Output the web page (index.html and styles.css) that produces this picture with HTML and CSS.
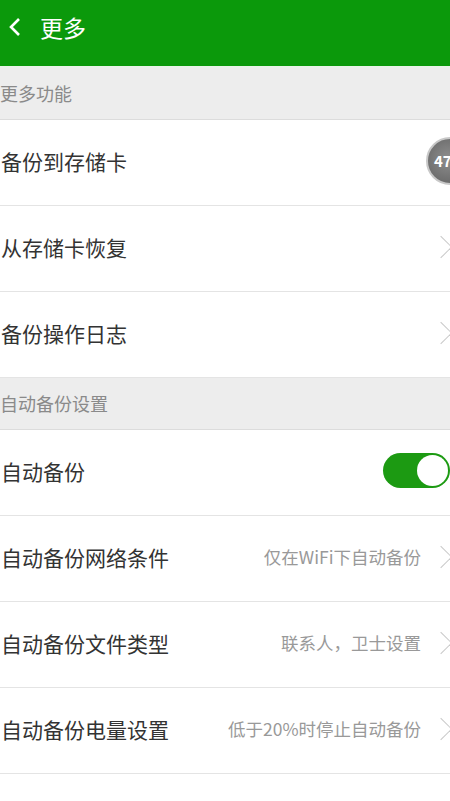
FILE: index.html
```html
<!DOCTYPE html>
<html lang="zh">
<head>
  <meta charset="UTF-8" />
  <link rel="stylesheet" href="styles.css">
</head>
<body>
  <div class="topbar">
    <svg class="back" width="16" height="22" viewBox="0 0 16 22"><path d="M12 3 L4 11 L12 19" fill="none" stroke="#fff" stroke-width="2.6"/></svg>
    <span class="title">更多</span>
  </div>

  <div class="section">更多功能</div>
  <div class="row">
    <span class="label">备份到存储卡</span>
    <span class="badge">47</span>
  </div>
  <div class="row">
    <span class="label">从存储卡恢复</span>
    <span class="chev"></span>
  </div>
  <div class="row">
    <span class="label">备份操作日志</span>
    <span class="chev"></span>
  </div>

  <div class="section">自动备份设置</div>
  <div class="row">
    <span class="label">自动备份</span>
    <span class="switch"><span class="knob"></span></span>
  </div>
  <div class="row">
    <span class="label">自动备份网络条件</span>
    <span class="value">仅在WiFi下自动备份</span>
    <span class="chev"></span>
  </div>
  <div class="row">
    <span class="label">自动备份文件类型</span>
    <span class="value">联系人，卫士设置</span>
    <span class="chev"></span>
  </div>
  <div class="row">
    <span class="label">自动备份电量设置</span>
    <span class="value">低于20%时停止自动备份</span>
    <span class="chev"></span>
  </div>
  <div class="row"></div>
</body>
</html>
```

FILE: styles.css
```css
body {
  margin: 0;
  background: #fff;
  font-family: "Noto Sans CJK SC", "Noto Sans", sans-serif;
  overflow: hidden;
}

.topbar {
  height: 68px;
  background: #0b990b;
  border-bottom: 2px solid #e9f3e9;
  display: flex;
  align-items: center;
  padding-left: 7px;
  padding-bottom: 12px;
  box-sizing: border-box;
}

.back {
  margin-right: 17px;
}

.title {
  color: #fff;
  font-size: 23px;
}

.section {
  height: 52px;
  background: #ededed;
  border-bottom: 1px solid #dcdcdc;
  color: #8a8a8a;
  font-size: 18px;
  display: flex;
  align-items: center;
  padding-bottom: 2px;
  box-sizing: border-box;
}

.row {
  height: 86px;
  border-bottom: 1px solid #e4e4e4;
  box-sizing: border-box;
  display: flex;
  align-items: center;
  padding-left: 1px;
  padding-bottom: 4px;
}

.label {
  font-size: 21px;
  color: #333;
  flex: 1;
}

.value {
  font-size: 17.5px;
  color: #999;
  margin-right: 12px;
}

.chev {
  width: 15px;
  height: 15px;
  border-top: 1.5px solid #c8c8c8;
  border-right: 1.5px solid #c8c8c8;
  transform: rotate(45deg);
  margin-right: 1px;
}

.badge {
  width: 48px;
  height: 48px;
  border-radius: 50%;
  background: radial-gradient(circle at 45% 45%, #8e8e8e, #6c6c6c 70%, #9a9a9a);
  border: 2px solid #c8c8c8;
  color: #fff;
  font-size: 15px;
  font-weight: bold;
  display: flex;
  align-items: center;
  padding-left: 6px;
  box-sizing: border-box;
  margin-right: -24px;
}

.switch {
  width: 67px;
  height: 35px;
  border-radius: 18px;
  background: #1c9a12;
  position: relative;
}

.knob {
  position: absolute;
  right: 2px;
  top: 2px;
  width: 31px;
  height: 31px;
  border-radius: 50%;
  background: #fff;
}
```
